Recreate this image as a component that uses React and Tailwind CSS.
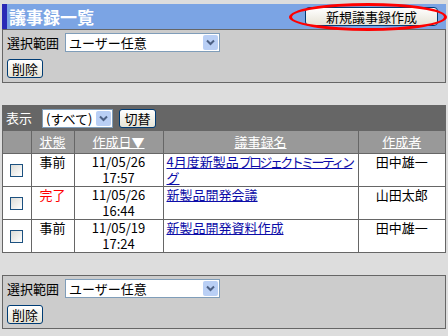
import React from "react";

const jp = { fontFamily: '"Noto Sans CJK JP", "DejaVu Sans", sans-serif' };

function Select({ value, width }) {
  return (
    <div className={`flex h-[19px] items-center border border-[#7f9db9] bg-white ${width}`}>
      <span className="flex-1 whitespace-nowrap pl-[3px] text-[13px] leading-none text-black">{value}</span>
      <span className="m-[1px] flex h-[15px] w-[15px] shrink-0 items-center justify-center rounded-[2px] bg-[#b9cff5]">
        <svg width="9" height="7" viewBox="0 0 9 7">
          <path d="M1 1.5 L4.5 5 L8 1.5" fill="none" stroke="#4d6185" strokeWidth="2" />
        </svg>
      </span>
    </div>
  );
}

function Button({ children, className = "" }) {
  return (
    <button
      className={`flex items-center justify-center whitespace-nowrap rounded-[3px] border border-[#003c74] bg-gradient-to-b from-white to-[#e6e3d6] text-[13px] leading-none text-black ${className}`}
    >
      {children}
    </button>
  );
}

function Checkbox() {
  return <span className="inline-block h-[13px] w-[13px] border border-[#1c5180] bg-gradient-to-br from-[#dcdcd7] to-white" />;
}

function RangePanel() {
  return (
    <div className="flex h-[54px] flex-col gap-[6px] border border-[#666] bg-[#cccccc] px-[4px] pt-[3px]">
      <div className="flex items-center gap-[6px]">
        <span className="text-[13px] text-black">選択範囲</span>
        <Select value="ユーザー任意" width="w-[155px]" />
      </div>
      <Button className="h-[19px] w-[36px]">削除</Button>
    </div>
  );
}

const rows = [
  {
    status: "事前",
    date: "11/05/26",
    time: "17:57",
    name: (
      <>
        4月度新製品<span className="tracking-[-2.6px]">プロジェクトミーティン</span>
        <br />グ
      </>
    ),
    author: "田中雄一",
  },
  { status: "完了", date: "11/05/26", time: "16:44", name: "新製品開発会議", author: "山田太郎" },
  { status: "事前", date: "11/05/19", time: "17:24", name: "新製品開発資料作成", author: "田中雄一" },
];

export default function App() {
  return (
    <div className="h-[336px] w-[448px] overflow-hidden bg-[#dddddd] px-[2px] pt-[4px]" style={jp}>
      {/* title bar */}
      <div className="relative flex h-[25px] items-center justify-between border-l-[5px] border-[#2a2ab6] bg-[#7ba4e4] pr-[8px]">
        <span className="pl-[2px] text-[17px] font-bold leading-none text-white">議事録一覧</span>
        <Button className="h-[19px] w-[133px] rounded-[4px]">新規議事録作成</Button>
        <span className="pointer-events-none absolute left-[282px] top-[-1px] h-[28px] w-[158px] rounded-[50%] border-[3px] border-[#ff0000]" />
      </div>

      <RangePanel />

      {/* list */}
      <div className="mt-[22px] border-l border-r border-b border-[#666]">
        <div className="flex h-[26px] items-center gap-[6px] bg-[#666] pl-[3px]">
          <span className="text-[13px] text-white">表示</span>
          <div className="ml-[4px]">
            <Select value="(すべて)" width="w-[71px]" />
          </div>
          <Button className="h-[19px] w-[37px]">切替</Button>
        </div>
        <table className="w-full border-collapse text-[13px] leading-[16px] text-black">
          <thead>
            <tr className="h-[22px] bg-[#999]">
              <th className="w-[28px] border-r border-[#666]" />
              <th className="w-[43px] border-r border-[#666] font-normal text-white underline">状態</th>
              <th className="w-[89px] border-r border-[#666] font-normal text-white underline">作成日▼</th>
              <th className="w-[195px] border-r border-[#666] font-normal text-white underline">議事録名</th>
              <th className="font-normal text-white underline">作成者</th>
            </tr>
          </thead>
          <tbody className="bg-white">
            {rows.map((r, i) => (
              <tr key={i} className="h-[33px] border-t border-[#666] align-top">
                <td className="border-r border-[#666] pt-[10px] text-center">
                  <Checkbox />
                </td>
                <td className={`border-r border-[#666] text-center ${r.status === "完了" ? "text-[#ff0000]" : ""}`}>
                  {r.status}
                </td>
                <td className="border-r border-[#666] text-center">
                  <div>{r.date}</div>
                  <div>{r.time}</div>
                </td>
                <td className="whitespace-nowrap border-r border-[#666] px-[3px]">
                  <a className="text-[#0d0da8] underline">{r.name}</a>
                </td>
                <td className="text-center">{r.author}</td>
              </tr>
            ))}
          </tbody>
        </table>
      </div>

      <div className="mt-[22px]">
        <RangePanel />
      </div>
    </div>
  );
}
